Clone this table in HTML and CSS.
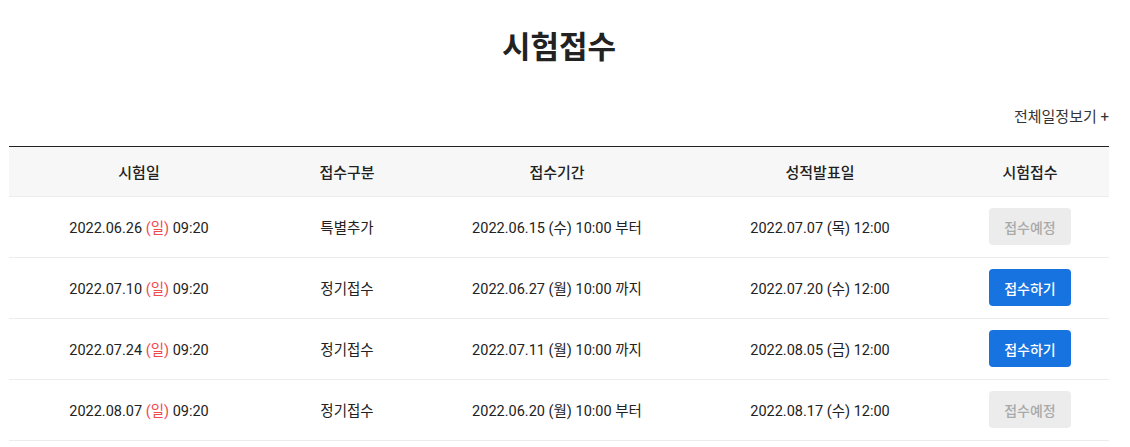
FILE: index.html
```html
<!DOCTYPE html>
<html lang="ko">
<head>
    <meta charset="UTF-8" />
    <title>시험접수</title>
    <link rel="stylesheet" href="styles.css">
</head>
<body>
<div class="wrap">
    <h1>시험접수</h1>
    <div class="more"><a href="#">전체일정보기 +</a></div>

    <table class="exam-table">
        <colgroup>
            <col class="c1"><col class="c2"><col class="c3"><col class="c4"><col class="c5">
        </colgroup>
        <thead>
        <tr>
            <th>시험일</th>
            <th>접수구분</th>
            <th>접수기간</th>
            <th>성적발표일</th>
            <th>시험접수</th>
        </tr>
        </thead>
        <tbody>
        <tr>
            <td>2022.06.26 <span class="sun">(일)</span> 09:20</td>
            <td>특별추가</td>
            <td>2022.06.15 (수) 10:00 부터</td>
            <td>2022.07.07 (목) 12:00</td>
            <td><button class="btn wait">접수예정</button></td>
        </tr>
        <tr>
            <td>2022.07.10 <span class="sun">(일)</span> 09:20</td>
            <td>정기접수</td>
            <td>2022.06.27 (월) 10:00 까지</td>
            <td>2022.07.20 (수) 12:00</td>
            <td><button class="btn apply">접수하기</button></td>
        </tr>
        <tr>
            <td>2022.07.24 <span class="sun">(일)</span> 09:20</td>
            <td>정기접수</td>
            <td>2022.07.11 (월) 10:00 까지</td>
            <td>2022.08.05 (금) 12:00</td>
            <td><button class="btn apply">접수하기</button></td>
        </tr>
        <tr>
            <td>2022.08.07 <span class="sun">(일)</span> 09:20</td>
            <td>정기접수</td>
            <td>2022.06.20 (월) 10:00 부터</td>
            <td>2022.08.17 (수) 12:00</td>
            <td><button class="btn wait">접수예정</button></td>
        </tr>
        </tbody>
    </table>
</div>
</body>
</html>
```

FILE: styles.css
```css
* { box-sizing: border-box; }
body {
    margin: 0;
    font-family: Roboto, "Noto Sans CJK KR", sans-serif;
    color: #222;
    background: #fff;
}
.wrap {
    width: 1100px;
    margin: 0 9px;
}
h1 {
    margin: 25px 0 0;
    font-size: 31px;
    line-height: 46px;
    font-weight: 700;
    text-align: center;
    color: #222;
}
.more {
    margin: 36px 0 19px;
    text-align: right;
    font-size: 15px;
    line-height: 20px;
}
.more a {
    color: #333;
    text-decoration: none;
}

.exam-table {
    width: 100%;
    border-collapse: collapse;
    table-layout: fixed;
    border-top: 1px solid #222;
    font-size: 14.5px;
}
.exam-table .c1 { width: 260px; }
.exam-table .c2 { width: 156px; }
.exam-table .c3 { width: 264px; }
.exam-table .c4 { width: 262px; }
.exam-table .c5 { width: 158px; }
.exam-table th {
    height: 50px;
    background: #f7f7f7;
    font-size: 15px;
    font-weight: 500;
    color: #222;
    border-bottom: 1px solid #ececec;
    padding: 0 0 1px;
}
.exam-table td {
    height: 61px;
    text-align: center;
    color: #222;
    border-bottom: 1px solid #ececec;
    padding: 0 0 1px;
}
.sun { color: #f04b4b; }

.btn {
    width: 82px;
    height: 37px;
    border: none;
    border-radius: 4px;
    font-family: inherit;
    font-size: 14px;
    font-weight: 500;
    cursor: pointer;
}
.btn.apply {
    background: #1673e0;
    color: #fff;
}
.btn.wait {
    background: #ececec;
    color: #a9a9a9;
    cursor: default;
}
```
